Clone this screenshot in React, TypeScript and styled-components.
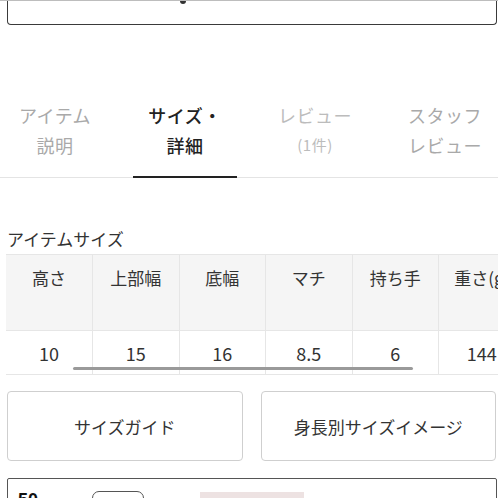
import React from 'react';
import styled, { createGlobalStyle } from 'styled-components';

const GlobalStyle = createGlobalStyle`
  html, body {
    margin: 0;
    padding: 0;
    background: #fff;
    font-family: 'Noto Sans CJK JP', 'Noto Sans', sans-serif;
    color: #333;
    overflow: hidden;
  }
`;

const tabs = [
  { top: 'アイテム', bottom: '説明', tone: 'muted' },
  { top: 'サイズ・', bottom: '詳細', tone: 'active' },
  { top: 'レビュー', bottom: '(1件)', tone: 'light', small: true },
  { top: 'スタッフ', bottom: 'レビュー', tone: 'muted' },
];

const sizes = [
  { label: '高さ', value: '10' },
  { label: '上部幅', value: '15' },
  { label: '底幅', value: '16' },
  { label: 'マチ', value: '8.5' },
  { label: '持ち手', value: '6' },
  { label: '重さ(g)', value: '144' },
];

export default function App() {
  return (
    <>
      <GlobalStyle />
      <Page>
        <TopRule />
        <Inset>
          <SelectBox>
            <ChevronTip />
          </SelectBox>
        </Inset>

        <TabBar>
          <TabList>
            {tabs.map((t) => (
              <Tab key={t.top} $tone={t.tone}>
                <span>{t.top}</span>
                <TabSub $small={t.small}>{t.bottom}</TabSub>
                {t.tone === 'active' && <Underline />}
              </Tab>
            ))}
          </TabList>
        </TabBar>

        <Inset>
          <SectionTitle>アイテムサイズ</SectionTitle>
        </Inset>

        <TableWrap>
          <SizeTable>
            <thead>
              <tr>
                {sizes.map((s) => (
                  <HeadCell key={s.label}>{s.label}</HeadCell>
                ))}
              </tr>
            </thead>
            <tbody>
              <tr>
                {sizes.map((s) => (
                  <ValueCell key={s.label}>{s.value}</ValueCell>
                ))}
              </tr>
            </tbody>
          </SizeTable>
          <ScrollThumb />
        </TableWrap>

        <ButtonRow>
          <GuideButton>サイズガイド</GuideButton>
          <GuideButton>身長別サイズイメージ</GuideButton>
        </ButtonRow>

        <Inset>
          <BottomCard>
            <BigNum>50</BigNum>
            <OutlineChip />
            <PinkChip />
          </BottomCard>
        </Inset>
      </Page>
    </>
  );
}

const Page = styled.div`
  width: 498px;
  height: 498px;
  overflow: hidden;
`;

const TopRule = styled.div`
  height: 1px;
  background: #bdbdbd;
`;

const Inset = styled.div`
  padding: 0 1px 0 7px;
`;

const SelectBox = styled.div`
  height: 23px;
  border: 1.5px solid #3a3a3a;
  border-top: none;
  border-radius: 0 0 4px 4px;
  padding-left: 172px;
`;

const ChevronTip = styled.div`
  width: 6px;
  height: 3px;
  background: #333;
  border-radius: 0 0 3px 3px;
`;

const TabBar = styled.div`
  margin-top: 75px;
  border-bottom: 1px solid #e4e4e4;
`;

const TabList = styled.div`
  display: flex;
  margin-left: -10px;
`;

const Tab = styled.div<{ $tone: string }>`
  position: relative;
  width: 130px;
  flex: none;
  display: flex;
  flex-direction: column;
  align-items: center;
  font-size: 18px;
  line-height: 30px;
  padding-bottom: 17px;
  letter-spacing: 0.5px;
  color: ${(p) => (p.$tone === 'active' ? '#222' : p.$tone === 'light' ? '#bcbcbc' : '#a9a9a9')};
  font-weight: ${(p) => (p.$tone === 'active' ? 500 : 400)};
`;

const TabSub = styled.span<{ $small?: boolean }>`
  font-size: ${(p) => (p.$small ? '15px' : '18px')};
`;

const Underline = styled.div`
  position: absolute;
  bottom: -1px;
  left: 13px;
  width: 104px;
  height: 2px;
  background: #222;
`;

const SectionTitle = styled.div`
  font-size: 17px;
  line-height: 24px;
  margin-top: 49px;
  color: #333;
`;

const TableWrap = styled.div`
  position: relative;
  margin-top: 3px;
  padding-left: 6px;
  height: 121px;
  overflow: hidden;
`;

const SizeTable = styled.table`
  border-collapse: collapse;
  table-layout: fixed;
  width: ${86.5 * 6}px;
`;

const HeadCell = styled.th`
  width: 86.5px;
  height: 76px;
  box-sizing: border-box;
  background: #f5f5f5;
  border: 1px solid #e6e6e6;
  border-left-color: #e0e0e0;
  font-size: 17px;
  font-weight: 400;
  color: #333;
  vertical-align: top;
  padding-top: 10px;
  white-space: nowrap;
  &:first-child {
    border-left: none;
  }
`;

const ValueCell = styled.td`
  height: 44px;
  box-sizing: border-box;
  border: 1px solid #e6e6e6;
  font-size: 18px;
  color: #333;
  text-align: center;
  padding: 0;
  &:first-child {
    border-left: none;
  }
`;

const ScrollThumb = styled.div`
  position: absolute;
  left: 73px;
  top: 113px;
  width: 340px;
  height: 3px;
  border-radius: 2px;
  background: #9a9a9a;
`;

const ButtonRow = styled.div`
  display: flex;
  gap: 18px;
  padding: 16px 2px 0 7px;
`;

const GuideButton = styled.div`
  flex: 1;
  height: 70px;
  box-sizing: border-box;
  border: 1px solid #cfcfcf;
  border-radius: 4px;
  display: flex;
  align-items: center;
  justify-content: center;
  font-size: 17px;
  color: #333;
`;

const BottomCard = styled.div`
  margin-top: 17px;
  height: 40px;
  border: 1.5px solid #555;
  border-radius: 2px;
  display: flex;
  align-items: flex-start;
  padding: 12px 0 0 10px;
`;

const BigNum = styled.div`
  font-family: 'Liberation Sans', sans-serif;
  font-weight: 700;
  font-size: 18px;
  line-height: 18px;
  color: #111;
  width: 74px;
`;

const OutlineChip = styled.div`
  width: 50px;
  height: 20px;
  border: 1.5px solid #555;
  border-radius: 7px;
  margin-right: 56px;
`;

const PinkChip = styled.div`
  width: 104px;
  height: 20px;
  margin-top: 1px;
  background: #ede2e2;
`;
